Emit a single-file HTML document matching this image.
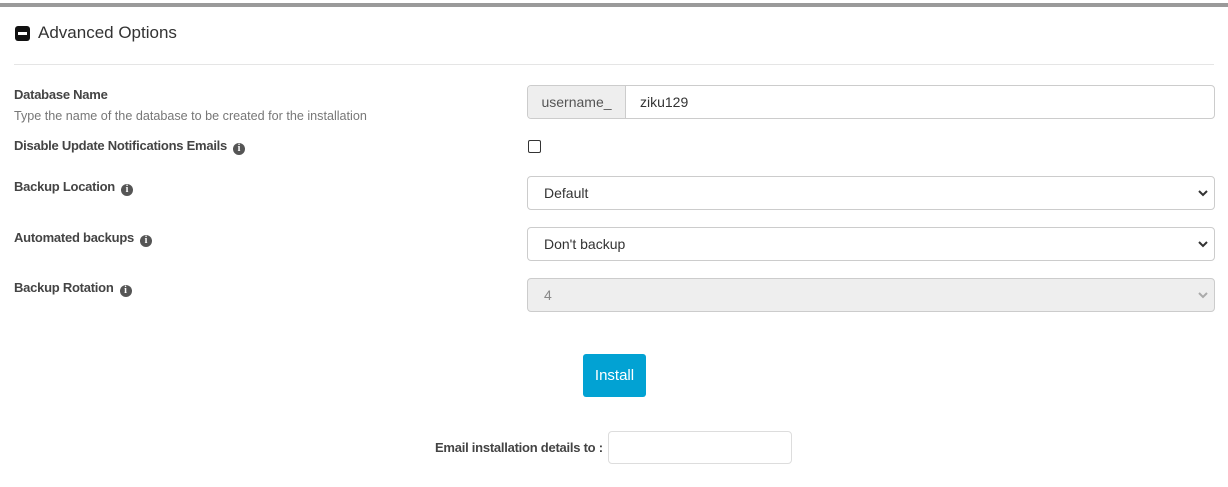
<!DOCTYPE html>
<html><head><style>
*{box-sizing:border-box;margin:0;padding:0}
body{width:1228px;height:487px;background:#fff;font-family:"Liberation Sans",sans-serif;color:#333;position:relative;overflow:hidden}
.a{position:absolute}
.bar{left:0;top:3px;width:1228px;height:4px;background:#9a9a9a}
.lbl{font-size:13px;font-weight:bold;color:#444;left:14px;letter-spacing:-0.25px}
.info{display:inline-block;width:12px;height:12px;border-radius:50%;background:#555;color:#fff;font-size:10px;font-weight:bold;text-align:center;line-height:12px;font-family:"Liberation Serif",serif;margin-left:6px;vertical-align:-1px;letter-spacing:0}
.sel{left:527px;width:688px;height:34px;border:1px solid #ccc;border-radius:4px;font-size:14px;padding-left:16px;line-height:32px;color:#333}
.sel svg{position:absolute;right:6px;top:12px}
</style></head><body>
<div class="a bar"></div>
<div class="a" style="left:15px;top:26px;width:15px;height:15px;background:#111;border-radius:3px"><div style="position:absolute;left:3px;top:6px;width:9px;height:3px;background:#fff"></div></div>
<div class="a" style="left:38px;top:23px;font-size:17px;color:#333">Advanced Options</div>
<div class="a" style="left:14px;top:64px;width:1200px;height:1px;background:#e5e5e5"></div>

<div class="a lbl" style="top:87px">Database Name</div>
<div class="a" style="left:14px;top:109px;font-size:12.6px;color:#777">Type the name of the database to be created for the installation</div>
<div class="a" style="left:527px;top:85px;width:688px;height:34px;border:1px solid #ccc;border-radius:4px;overflow:hidden">
<div style="position:absolute;left:0;top:0;width:98px;height:32px;background:#eee;border-right:1px solid #ccc;font-size:14px;line-height:32px;text-align:center;color:#555">username_</div>
<div style="position:absolute;left:112px;top:0;font-size:14px;line-height:32px">ziku129</div></div>

<div class="a lbl" style="top:138px">Disable Update Notifications Emails<span class="info">i</span></div>
<div class="a" style="left:528px;top:140px;width:13px;height:13px;border:1px solid #333;border-radius:2px"></div>

<div class="a lbl" style="top:179px">Backup Location<span class="info">i</span></div>
<div class="a sel" style="top:176px">Default<svg width="10" height="8" viewBox="0 0 10 8"><path d="M1 2l4 4 4-4" stroke="#333" stroke-width="2" fill="none"/></svg></div>

<div class="a lbl" style="top:230px">Automated backups<span class="info">i</span></div>
<div class="a sel" style="top:227px">Don't backup<svg width="10" height="8" viewBox="0 0 10 8"><path d="M1 2l4 4 4-4" stroke="#333" stroke-width="2" fill="none"/></svg></div>

<div class="a lbl" style="top:280px">Backup Rotation<span class="info">i</span></div>
<div class="a sel" style="top:278px;background:#eee;color:#888">4<svg width="10" height="8" viewBox="0 0 10 8"><path d="M1 2l4 4 4-4" stroke="#aaa" stroke-width="2" fill="none"/></svg></div>

<div class="a" style="left:583px;top:354px;width:63px;height:43px;background:#02a2d3;border-radius:3px;color:#fff;font-size:15px;text-align:center;line-height:43px">Install</div>

<div class="a lbl" style="left:435px;top:440px">Email installation details to :</div>
<div class="a" style="left:608px;top:431px;width:184px;height:33px;border:1px solid #ddd;border-radius:4px"></div>
</body></html>
